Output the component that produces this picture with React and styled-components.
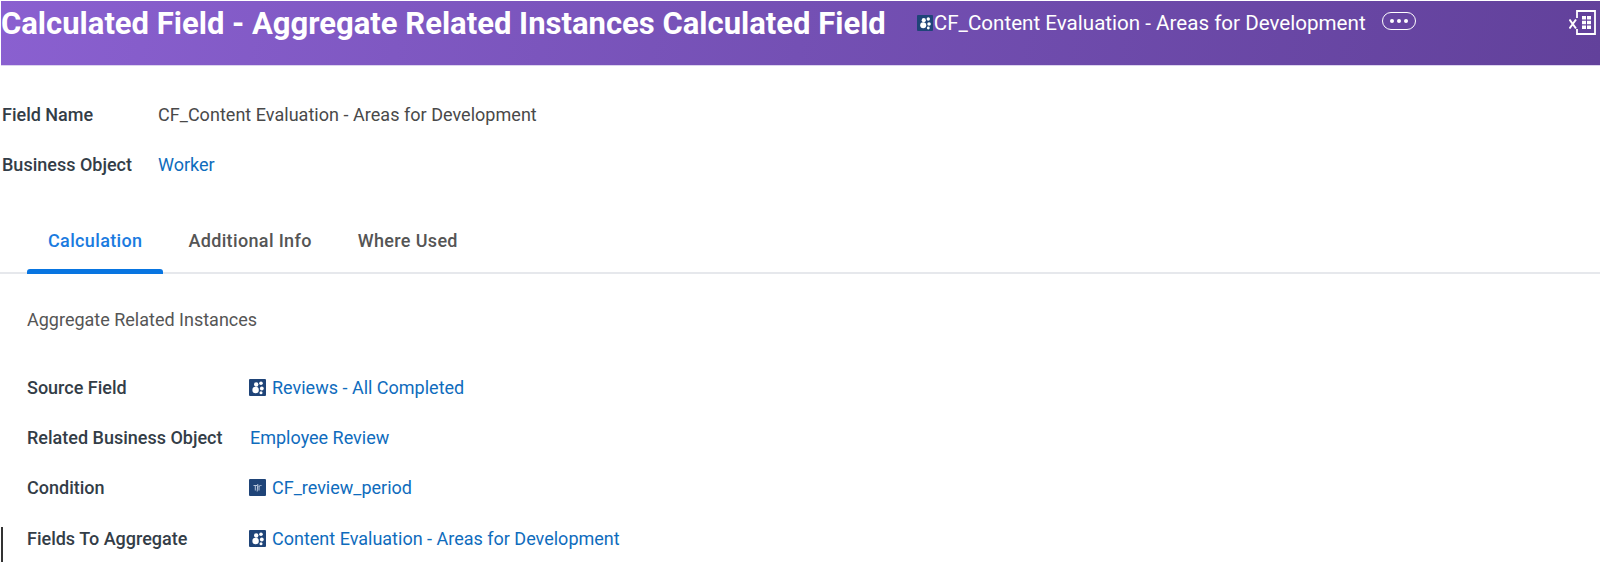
import React from 'react'
import styled, { createGlobalStyle } from 'styled-components'

const GlobalStyle = createGlobalStyle`
  html, body {
    margin: 0;
    padding: 0;
    background: #fff;
    font-family: Roboto, "Liberation Sans", sans-serif;
  }
`

const Page = styled.div`
  width: 1600px;
  height: 576px;
  overflow: hidden;
  position: relative;
  background: #fff;
`

const Banner = styled.header`
  height: 64px;
  margin: 1px 0 0 1px;
  padding: 7px 0 0 0;
  box-sizing: border-box;
  display: flex;
  align-items: flex-start;
  color: #fff;
  background: linear-gradient(100deg, #8a60d0 0%, #7450b4 50%, #62419b 100%);
  box-shadow: 0 1px 0 #dcd3ee;
`

const Title = styled.h1`
  margin: 0;
  font-size: 31px;
  line-height: 32px;
  font-weight: 700;
  white-space: nowrap;
`

const Subject = styled.div`
  display: flex;
  align-items: center;
  gap: 1px;
  margin-left: 31px;
  height: 30px;
  font-size: 20.6px;
  white-space: nowrap;
`

const MoreButton = styled.span`
  width: 34px;
  height: 18px;
  margin: -5px 0 0 15px;
  border: 1.5px solid #fff;
  border-radius: 9px;
  box-sizing: border-box;
  display: flex;
  align-items: center;
  justify-content: center;
  gap: 3px;
  i {
    width: 4px;
    height: 4px;
    border-radius: 50%;
    background: #fff;
  }
`

const ExportIcon = styled.svg`
  width: 27px;
  height: 25px;
  margin-left: auto;
  margin-right: 4px;
  margin-top: 2px;
`

const Summary = styled.section`
  display: flex;
  flex-direction: column;
  gap: 30px;
  padding: 39px 0 0 2px;
`

const Row = styled.div`
  display: grid;
  grid-template-columns: ${p => p.$labelWidth}px 1fr;
  align-items: center;
  height: 20px;
  font-size: 18px;
`

const Label = styled.span`
  font-weight: 500;
  color: #333d47;
`

const Value = styled.span`
  color: #494949;
  letter-spacing: 0.03px;
`

const LinkValue = styled.span`
  display: flex;
  align-items: center;
  gap: 6px;
  color: #0f6cbd;
  padding-left: ${p => (p.$indent ? 1 : 0)}px;
`

const TabBar = styled.nav`
  display: flex;
  margin-top: 42px;
  padding-left: 27px;
  height: 58px;
  border-bottom: 2px solid #e6e8ec;
  box-sizing: border-box;
`

const Tab = styled.div`
  position: relative;
  padding: 0 21px 10px;
  margin-right: 4px;
  height: 58px;
  box-sizing: border-box;
  display: flex;
  align-items: center;
  font-size: 18px;
  font-weight: 500;
  letter-spacing: 0.35px;
  color: ${p => (p.$active ? '#1a7be0' : '#555')};
  &::after {
    content: '';
    display: ${p => (p.$active ? 'block' : 'none')};
    position: absolute;
    left: 0;
    right: 0;
    bottom: 0;
    height: 5px;
    background: #0875e1;
    border-radius: 3px 3px 0 0;
  }
`

const Details = styled.section`
  padding: 36px 0 0 27px;
`

const Heading = styled.div`
  font-size: 18px;
  line-height: 20px;
  color: #555;
  margin-bottom: 47px;
`

const Fields = styled.div`
  display: flex;
  flex-direction: column;
  gap: 30.2px;
`

const CaretMark = styled.span`
  position: absolute;
  left: 1px;
  top: 527px;
  width: 1.5px;
  height: 35px;
  background: #333;
`

const IconBox = styled.svg`
  width: 17px;
  height: 17px;
  flex: none;
`

// the little white blobs on the navy square
const FieldIcon = ({ size }) => (
  <IconBox viewBox="0 0 17 17" style={size ? { width: size, height: size } : undefined}>
    <rect width="17" height="17" rx="1" fill="#1f4478" />
    <circle cx="7.200" cy="5.500" r="2.200" fill="#fff" />
    <circle cx="12" cy="4.200" r="1.800" fill="#fff" />
    <circle cx="12.800" cy="9.500" r="1.900" fill="#fff" />
    <circle cx="6.600" cy="11" r="3.200" fill="#fff" />
    <circle cx="12" cy="13.800" r="1.500" fill="#fff" />
  </IconBox>
)

const ConditionIcon = () => (
  <IconBox viewBox="0 0 17 17">
    <rect width="17" height="17" rx="1" fill="#1f4478" />
    <path d="M4.500 6.500h3.500M6.300 6.500v5M10 6.500v5M10 7.500c.5-1 1.500-1 2.500-1M8.800 5l-.600 7.500" stroke="#b9c7dc" strokeWidth="1" fill="none" />
  </IconBox>
)

const rows = [
  { label: 'Source Field', icon: <FieldIcon />, text: 'Reviews - All Completed' },
  { label: 'Related Business Object', text: 'Employee Review', indent: true },
  { label: 'Condition', icon: <ConditionIcon />, text: 'CF_review_period' },
  { label: 'Fields To Aggregate', icon: <FieldIcon />, text: 'Content Evaluation - Areas for Development' },
]

const App = () => (
  <Page>
    <GlobalStyle />
    <Banner>
      <Title>Calculated Field - Aggregate Related Instances Calculated Field</Title>
      <Subject>
        <FieldIcon size={16} />
        CF_Content Evaluation - Areas for Development
        <MoreButton><i /><i /><i /></MoreButton>
      </Subject>
      <ExportIcon viewBox="0 0 27 25" fill="none">
        <path d="M8 8V1h18v23H8v-5" stroke="#fff" strokeWidth="1.800" />
        <path d="M.5 9.500l6.500 9M7 9.500l-6.500 9" stroke="#fff" strokeWidth="2" />
        <path d="M13 6h4v3.500h-4zM18 6h4v3.500h-4zM13 10.800h4v3.500h-4zM18 10.800h4v3.500h-4zM13 15.500h4V19h-4zM18 15.500h4V19h-4z" fill="#fff" />
      </ExportIcon>
    </Banner>

    <Summary>
      <Row $labelWidth={156}>
        <Label>Field Name</Label>
        <Value>CF_Content Evaluation - Areas for Development</Value>
      </Row>
      <Row $labelWidth={156}>
        <Label>Business Object</Label>
        <LinkValue>Worker</LinkValue>
      </Row>
    </Summary>

    <TabBar>
      <Tab $active>Calculation</Tab>
      <Tab>Additional Info</Tab>
      <Tab>Where Used</Tab>
    </TabBar>

    <Details>
      <Heading>Aggregate Related Instances</Heading>
      <Fields>
        {rows.map(r => (
          <Row key={r.label} $labelWidth={222}>
            <Label>{r.label}</Label>
            <LinkValue $indent={r.indent}>
              {r.icon}
              {r.text}
            </LinkValue>
          </Row>
        ))}
      </Fields>
    </Details>
    <CaretMark />
  </Page>
)

export default App
